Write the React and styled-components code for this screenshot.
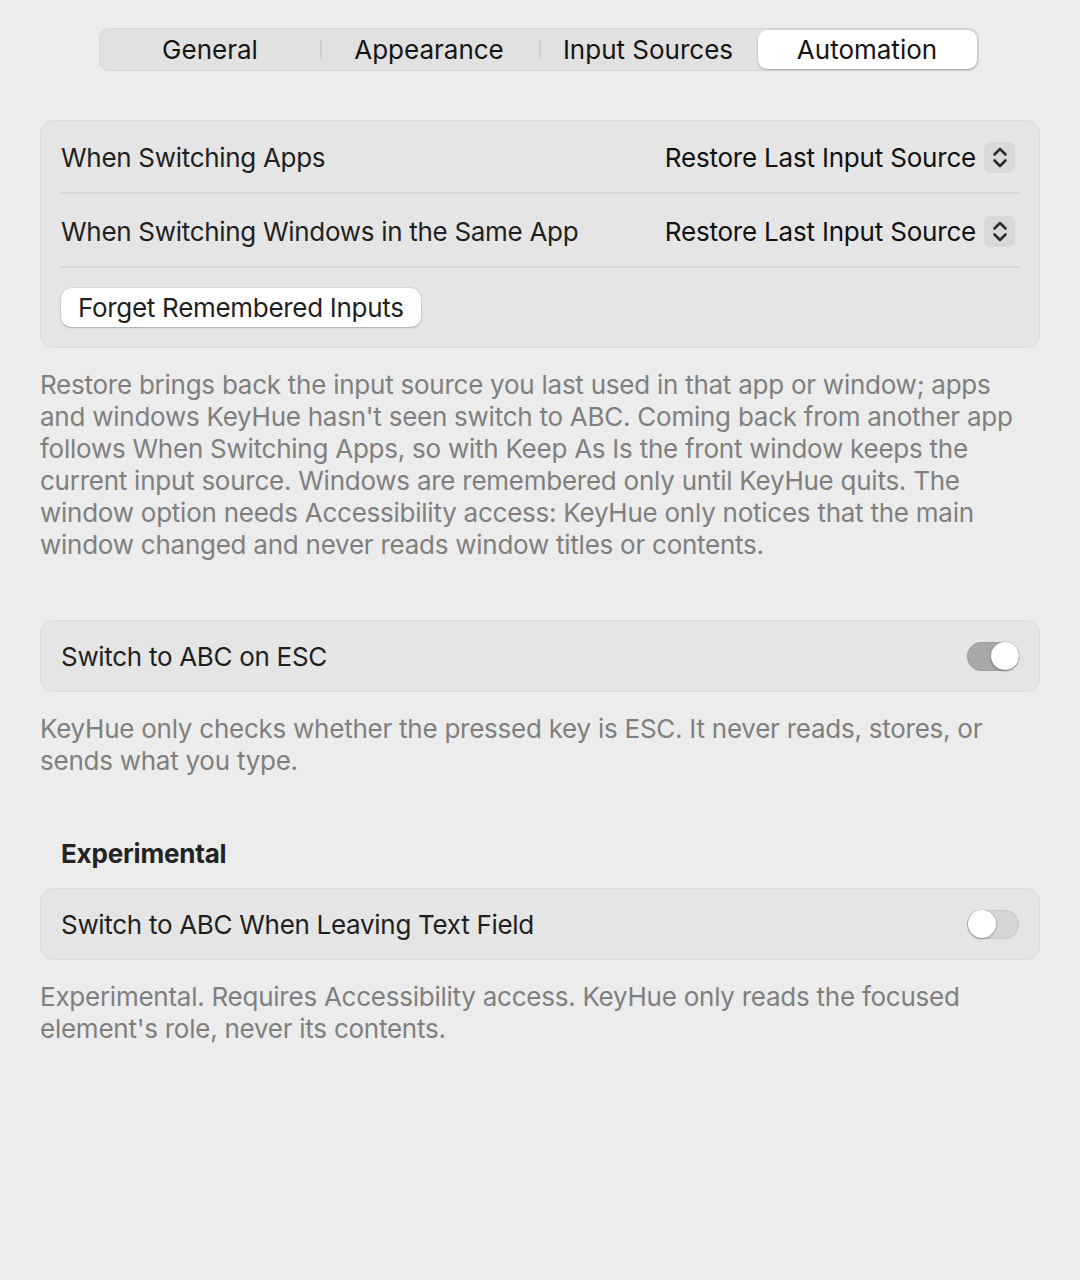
import { useState } from "react";
import styled, { createGlobalStyle } from "styled-components";

const GlobalStyle = createGlobalStyle`
  html, body {
    margin: 0;
    padding: 0;
    background: #ececec;
  }
  body {
    font-family: Inter, "Noto Sans", "Liberation Sans", sans-serif;
    color: #1d1d1d;
    -webkit-font-smoothing: antialiased;
  }
`;

const tabs = ["General", "Appearance", "Input Sources", "Automation"];

const StepperIcon = () => (
  <svg width="16" height="23" viewBox="0 0 16 23" fill="none">
    <path
      d="M2.5 8.5 L8 3 L13.5 8.5"
      stroke="#2c2c2c"
      strokeWidth="2.6"
      strokeLinecap="round"
      strokeLinejoin="round"
    />
    <path
      d="M2.5 14.5 L8 20 L13.5 14.5"
      stroke="#2c2c2c"
      strokeWidth="2.6"
      strokeLinecap="round"
      strokeLinejoin="round"
    />
  </svg>
);

const PopUp = ({ value }) => (
  <PopUpButton>
    <span>{value}</span>
    <Stepper>
      <StepperIcon />
    </Stepper>
  </PopUpButton>
);

const App = () => {
  const [active, setActive] = useState(3);
  const [escSwitch, setEscSwitch] = useState(true);
  const [leaveField, setLeaveField] = useState(false);

  return (
    <Page>
      <GlobalStyle />
      <TabBar>
        {tabs.map((tab, i) => (
          <Tab
            key={tab}
            $active={i === active}
            $divider={i > 0 && i !== active && i - 1 !== active}
            onClick={() => setActive(i)}
          >
            {tab}
          </Tab>
        ))}
      </TabBar>

      <Card>
        <Row $h={73} $divided>
          <Label>When Switching Apps</Label>
          <PopUp value="Restore Last Input Source" />
        </Row>
        <Row $h={74} $divided>
          <Label>When Switching Windows in the Same App</Label>
          <PopUp value="Restore Last Input Source" />
        </Row>
        <Row $h={79}>
          <PushButton>Forget Remembered Inputs</PushButton>
        </Row>
      </Card>
      <Note>
        Restore brings back the input source you last used in that app or
        window; apps and windows KeyHue hasn't seen switch to ABC. Coming back
        from another app follows When Switching Apps, so with Keep As Is the
        front window keeps the current input source. Windows are remembered
        only until KeyHue quits. The window option needs Accessibility access:
        KeyHue only notices that the main window changed and never reads window
        titles or contents.
      </Note>

      <Section $gap={59}>
        <Card>
          <Row>
            <Label>Switch to ABC on ESC</Label>
            <Toggle $on={escSwitch} onClick={() => setEscSwitch(!escSwitch)}>
              <Knob $on={escSwitch} />
            </Toggle>
          </Row>
        </Card>
        <Note>
          KeyHue only checks whether the pressed key is ESC. It never reads,
          stores, or sends what you type.
        </Note>
      </Section>

      <Section $gap={61}>
        <SectionTitle>Experimental</SectionTitle>
        <Card>
          <Row>
            <Label>Switch to ABC When Leaving Text Field</Label>
            <Toggle $on={leaveField} onClick={() => setLeaveField(!leaveField)}>
              <Knob $on={leaveField} />
            </Toggle>
          </Row>
        </Card>
        <Note>
          Experimental. Requires Accessibility access. KeyHue only reads the
          focused element's role, never its contents.
        </Note>
      </Section>
    </Page>
  );
};

export default App;

const Page = styled.div`
  width: 1080px;
  min-height: 1280px;
  box-sizing: border-box;
  padding: 28px 40px 40px;
  display: flex;
  flex-direction: column;
  background: #ececec;
`;

const TabBar = styled.div`
  align-self: center;
  margin: 0 3px 49px 0;
  display: grid;
  grid-template-columns: repeat(4, 219px);
  padding: 1px;
  height: 43px;
  box-sizing: border-box;
  background: #e1e1e1;
  border: 1px solid #d6d6d6;
  border-radius: 10px;
`;

const Tab = styled.div`
  position: relative;
  display: flex;
  align-items: center;
  justify-content: center;
  font-size: 26px;
  color: #151515;
  border-radius: 9px;
  cursor: default;
  background: ${(p) => (p.$active ? "#ffffff" : "transparent")};
  box-shadow: ${(p) =>
    p.$active ? "0 1px 2px rgba(0,0,0,0.22), 0 0 0 0.5px rgba(0,0,0,0.08)" : "none"};

  &::before {
    content: "";
    display: ${(p) => (p.$divider ? "block" : "none")};
    position: absolute;
    left: 0;
    top: 10px;
    bottom: 10px;
    width: 2px;
    background: #cfcfcf;
  }
`;

const Card = styled.div`
  background: #e5e5e5;
  border: 1px solid #dadada;
  border-radius: 14px;
  padding: 0 20px;
`;

const Row = styled.div`
  display: flex;
  align-items: center;
  justify-content: space-between;
  box-sizing: border-box;
  height: ${(p) => p.$h || 70}px;
  border-bottom: ${(p) => (p.$divided ? "2px solid #d8d8d8" : "none")};
  padding-top: ${(p) => (p.$divided ? 2 : 0)}px;
`;

const Label = styled.span`
  font-size: 26px;
  letter-spacing: -0.3px;
  color: #1f1f1f;
`;

const PopUpButton = styled.div`
  display: flex;
  align-items: center;
  gap: 8px;
  margin-right: 4px;
  font-size: 26px;
  letter-spacing: -0.2px;
  color: #111;
`;

const Stepper = styled.div`
  display: flex;
  align-items: center;
  justify-content: center;
  width: 31px;
  height: 31px;
  border-radius: 7px;
  background: #d9d9d9;
`;

const PushButton = styled.button`
  font-family: inherit;
  font-size: 26px;
  letter-spacing: -0.3px;
  color: #1f1f1f;
  background: #ffffff;
  border: none;
  border-radius: 10px;
  height: 39px;
  padding: 0 17px;
  box-shadow: 0 1px 2px rgba(0, 0, 0, 0.22), 0 0 0 0.5px rgba(0, 0, 0, 0.1);
`;

const Note = styled.p`
  margin: 21px 0 0;
  font-size: 26px;
  line-height: 32px;
  letter-spacing: -0.25px;
  color: #7f7f7f;
`;

const Section = styled.div`
  margin-top: ${(p) => p.$gap}px;
`;

const SectionTitle = styled.div`
  font-size: 26px;
  font-weight: 700;
  letter-spacing: -0.2px;
  color: #232323;
  padding: 0 21px;
  margin-bottom: 19px;
`;

const Toggle = styled.div`
  position: relative;
  width: 52px;
  height: 29px;
  border-radius: 15px;
  background: ${(p) => (p.$on ? "#a8a8a8" : "#d5d5d5")};
  box-shadow: inset 0 0 0 1px rgba(0, 0, 0, 0.06);
  cursor: default;
`;

const Knob = styled.div`
  position: absolute;
  top: 0.5px;
  left: ${(p) => (p.$on ? "23.5px" : "0.5px")};
  width: 28px;
  height: 28px;
  border-radius: 50%;
  background: #ffffff;
  box-shadow: 0 1px 2px rgba(0, 0, 0, 0.3), 0 0 0 0.5px rgba(0, 0, 0, 0.15);
`;
